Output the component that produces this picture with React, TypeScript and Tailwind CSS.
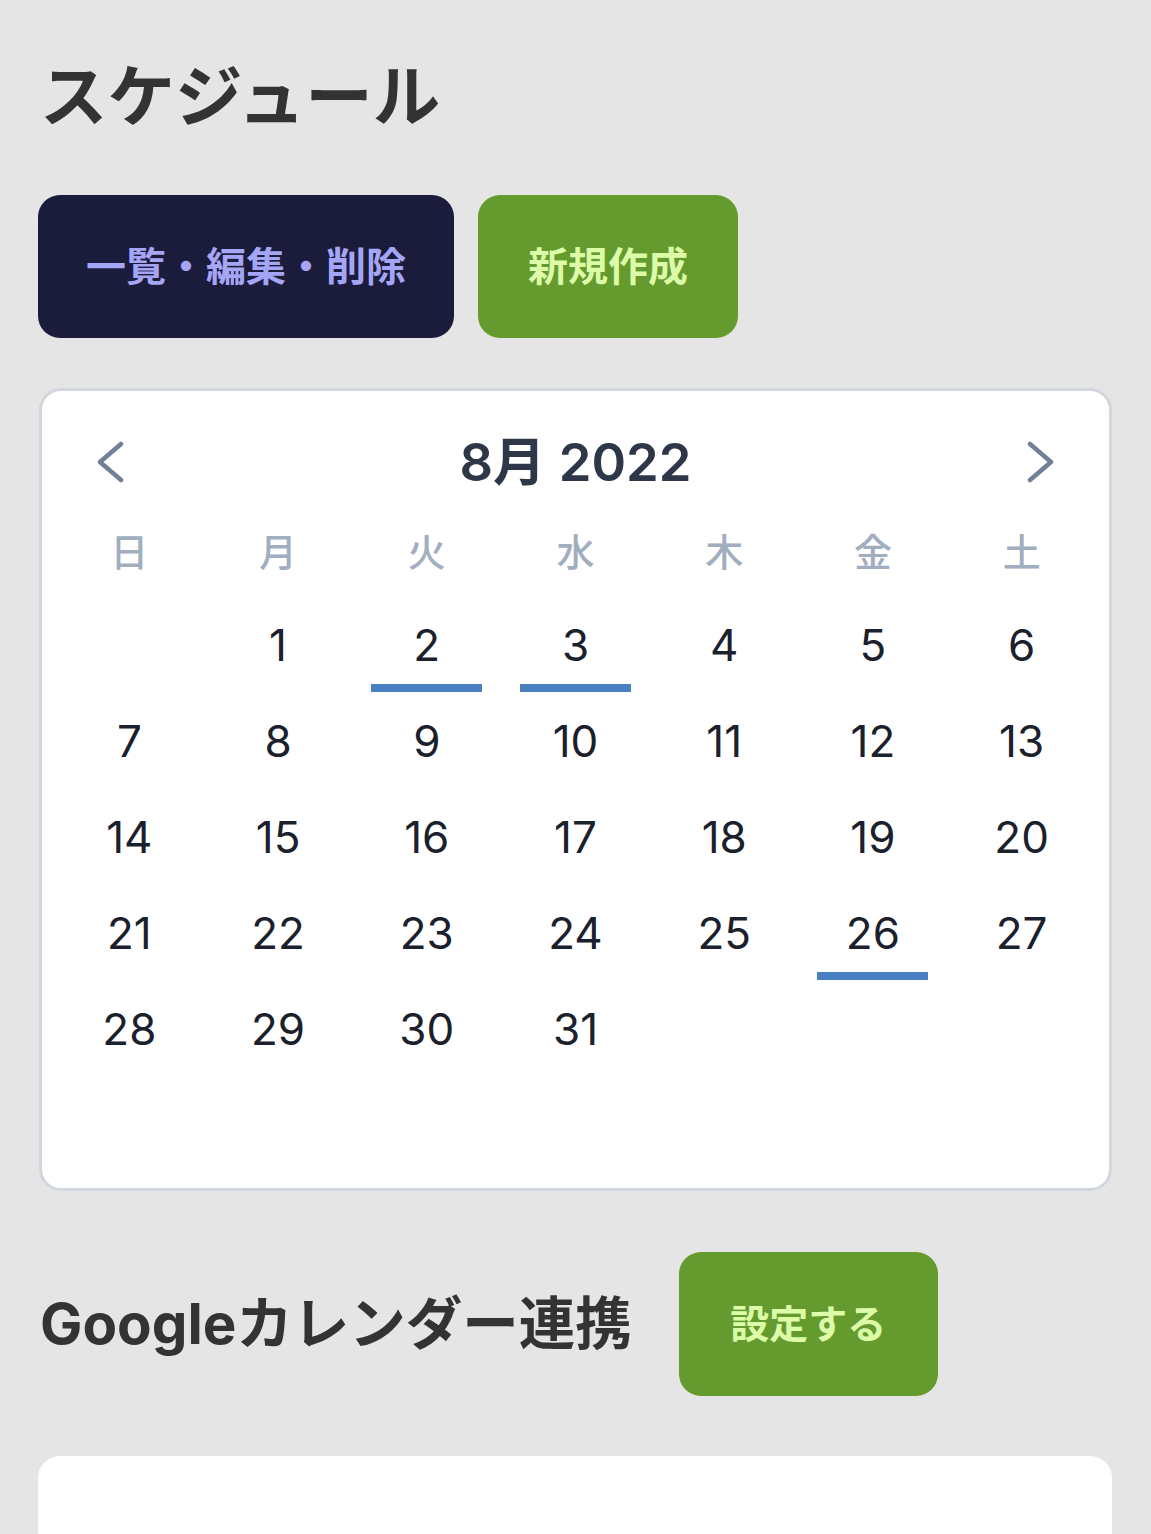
import React from "react";

const weekdays = ["日", "月", "火", "水", "木", "金", "土"];
const marked = new Set([2, 3, 26]);

function buildWeeks(): (number | null)[][] {
  const cells: (number | null)[] = [null];
  for (let d = 1; d <= 31; d++) cells.push(d);
  while (cells.length < 42) cells.push(null);
  const weeks: (number | null)[][] = [];
  for (let i = 0; i < 6; i++) weeks.push(cells.slice(i * 7, i * 7 + 7));
  return weeks;
}

export default function App() {
  const weeks = buildWeeks();
  return (
    <div className="min-h-[1534px] bg-[#e5e5e5] px-[38px] pt-[57px] font-['Inter','Noto_Sans_CJK_JP',sans-serif] overflow-hidden">
      <h1 className="text-[67.5px] leading-[80px] font-bold text-[#333333] pl-[2px]">スケジュール</h1>

      <div className="mt-[58px] flex gap-[24px]">
        <button className="h-[143px] w-[416px] rounded-[22px] bg-[#1b1b3b] text-[40px] font-bold text-[#a5a5f5]">
          一覧・編集・削除
        </button>
        <button className="h-[143px] w-[260px] rounded-[22px] bg-[#659a2f] text-[40px] font-bold text-[#dcfca8]">
          新規作成
        </button>
      </div>

      <div className="mt-[50px] ml-[1px] w-[1073px] h-[803px] rounded-[22px] border-[3px] border-[#d2d6de] bg-white px-[13px] pt-[14px]">
        <div className="h-[114px] flex items-center justify-between px-[41px]">
          <svg width="28" height="44" viewBox="0 0 28 44" fill="none">
            <path d="M25 4 L4 22 L25 40" stroke="#718096" strokeWidth="4.5" strokeLinecap="round" strokeLinejoin="round" />
          </svg>
          <div className="text-[52.5px] font-semibold text-[#2d3748] leading-none">8月 2022</div>
          <svg width="28" height="44" viewBox="0 0 28 44" fill="none">
            <path d="M3 4 L24 22 L3 40" stroke="#718096" strokeWidth="4.5" strokeLinecap="round" strokeLinejoin="round" />
          </svg>
        </div>

        <div className="grid grid-cols-7 h-[66px] items-center">
          {weekdays.map((w) => (
            <div key={w} className="text-center text-[38px] font-medium text-[#a0aec0] leading-none">
              {w}
            </div>
          ))}
        </div>

        <div className="mt-[12px]">
          {weeks.map((week, wi) => (
            <div key={wi} className="grid grid-cols-7">
              {week.map((d, di) => (
                <div key={di} className="h-[96px] flex flex-col items-center">
                  <div className="flex-1 flex items-center text-[44px] text-[#1a202c] leading-none pt-[8px]">
                    {d ?? ""}
                  </div>
                  <div className={`h-[8px] w-[111px] mb-[1px] ${d !== null && marked.has(d) ? "bg-[#4a7fc1]" : ""}`} />
                </div>
              ))}
            </div>
          ))}
        </div>
      </div>

      <div className="mt-[61px] flex items-center gap-[47px]">
        <h2 className="text-[56.5px] font-bold text-[#333333] leading-none pl-[2px]">Googleカレンダー連携</h2>
        <button className="h-[144px] w-[259px] rounded-[22px] bg-[#659a2f] text-[39px] font-bold text-[#dcfca8]">
          設定する
        </button>
      </div>

      <div className="mt-[60px] w-[1074px] h-[200px] rounded-t-[22px] bg-white" />
    </div>
  );
}
